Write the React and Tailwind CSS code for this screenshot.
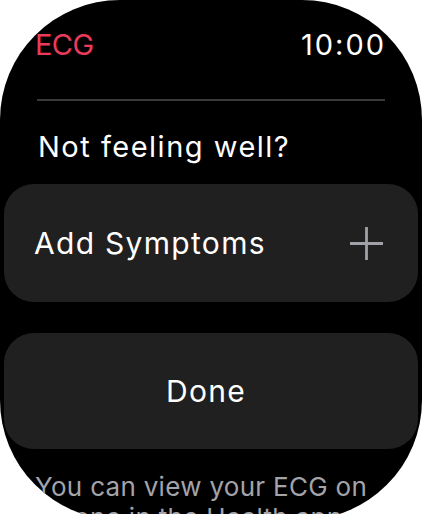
import React from "react";

export default function App() {
  return (
    <div className="w-[422px] h-[514px] bg-white overflow-hidden">
      <div
        className="w-[422px] h-[520px] bg-black rounded-[120px] overflow-hidden flex flex-col"
        style={{ fontFamily: "Inter, 'Noto Sans', sans-serif" }}
      >
        <div className="shrink-0 flex justify-between items-start pt-[30px] pl-[35px] pr-[36px] text-[29px] leading-[29px]">
          <span className="text-[#eb3a5a] tracking-[-0.6px]">ECG</span>
          <span className="text-white tracking-[2px]">10:00</span>
        </div>
        <div className="shrink-0 mx-[37px] mt-[40px] h-[2px] bg-[#3a3a3c]" />
        <div className="shrink-0 mt-[31px] pl-[38px] text-[29px] leading-[29px] text-white tracking-[1.5px]">
          Not feeling well?
        </div>
        <div className="shrink-0 mt-[23px] mx-[4px] h-[118px] rounded-[30px] bg-[#202020] flex items-center justify-between pl-[30px] pr-[35px]">
          <span className="text-[30px] leading-[30px] text-white tracking-[1.3px]">Add Symptoms</span>
          <svg width="33" height="33" viewBox="0 0 33 33" className="block">
            <line x1="16.5" y1="0" x2="16.5" y2="33" stroke="#a1a1a8" strokeWidth="2.8" />
            <line x1="0" y1="16.5" x2="33" y2="16.5" stroke="#a1a1a8" strokeWidth="2.8" />
          </svg>
        </div>
        <div className="shrink-0 mt-[31px] mx-[4px] h-[116px] rounded-[30px] bg-[#202020] flex items-center justify-center pr-[10px]">
          <span className="text-[30px] leading-[30px] text-white tracking-[1.3px]">Done</span>
        </div>
        <p className="shrink-0 mt-[22px] px-[35px] text-[26px] leading-[31px] text-[#a3a3aa] tracking-[0.3px]">
          You can view your ECG on iPhone in the Health app.
        </p>
      </div>
    </div>
  );
}
